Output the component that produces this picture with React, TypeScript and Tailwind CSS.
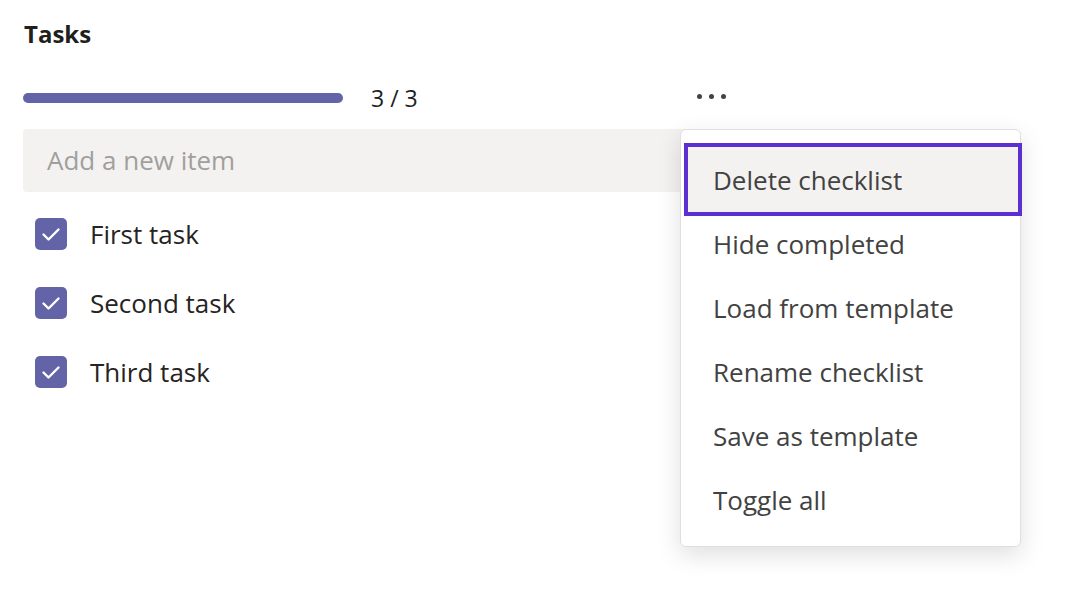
import React from "react";

const font = { fontFamily: '"Open Sans", "Noto Sans", sans-serif' };

function Check() {
  return (
    <div className="w-8 h-8 rounded-[5px] bg-[#6264a7] flex items-center justify-center shrink-0">
      <svg width="32" height="32" viewBox="0 0 32 32" fill="none">
        <path d="M8.5 16.5 L13.5 21.5 L23.5 11.5" stroke="white" strokeWidth="2.4" strokeLinecap="round" strokeLinejoin="round" />
      </svg>
    </div>
  );
}

const tasks = ["First task", "Second task", "Third task"];
const menu = ["Delete checklist", "Hide completed", "Load from template", "Rename checklist", "Save as template", "Toggle all"];

export default function App() {
  return (
    <div className="relative w-[1072px] h-[605px] bg-white overflow-hidden text-[#252423]" style={font}>
      <div className="pl-6 pt-[18px]">
        <div className="text-[24px] font-bold leading-[32px] text-[#201f1e]">Tasks</div>
        <div className="flex items-center mt-[36px] h-6">
          <div className="w-[320px] h-[10px] rounded-full bg-[#6264a7] -ml-px" />
          <div className="ml-[28px] text-[23px] leading-6 text-[#201f1e]">3 / 3</div>
          <div className="ml-[279px] flex gap-[7px] -mt-[4px]">
            <span className="w-[5px] h-[5px] rounded-full bg-[#424242]" />
            <span className="w-[5px] h-[5px] rounded-full bg-[#424242]" />
            <span className="w-[5px] h-[5px] rounded-full bg-[#424242]" />
          </div>
        </div>
        <div className="mt-[19px] -ml-px w-[680px] h-[63px] rounded-[4px] bg-[#f3f2f1] flex items-center pl-6 text-[26px] text-[#a19f9d]">
          Add a new item
        </div>
        <div className="mt-[26px] flex flex-col gap-[37px] pl-[11px]">
          {tasks.map((t) => (
            <div key={t} className="flex items-center gap-[23px]">
              <Check />
              <span className="text-[26px] leading-[32px]">{t}</span>
            </div>
          ))}
        </div>
      </div>

      <div className="absolute left-[680px] top-[129px] w-[341px] h-[418px] rounded-[6px] border border-[#e1dfdd] bg-white shadow-[0_8px_24px_rgba(0,0,0,0.13)] pt-[13px]">
        {menu.map((m, i) => (
          <div
            key={m}
            className={
              i === 0
                ? "h-[73px] -mb-[4px] -mr-[2px] ml-[3px] border-[4px] border-[#5b2fd0] bg-[#f3f2f1] flex items-center pl-[25px] pt-[2px] text-[26px] text-[#424242]"
                : "h-[64px] flex items-center pl-[32px] text-[26px] text-[#424242]"
            }
          >
            {m}
          </div>
        ))}
      </div>
    </div>
  );
}
